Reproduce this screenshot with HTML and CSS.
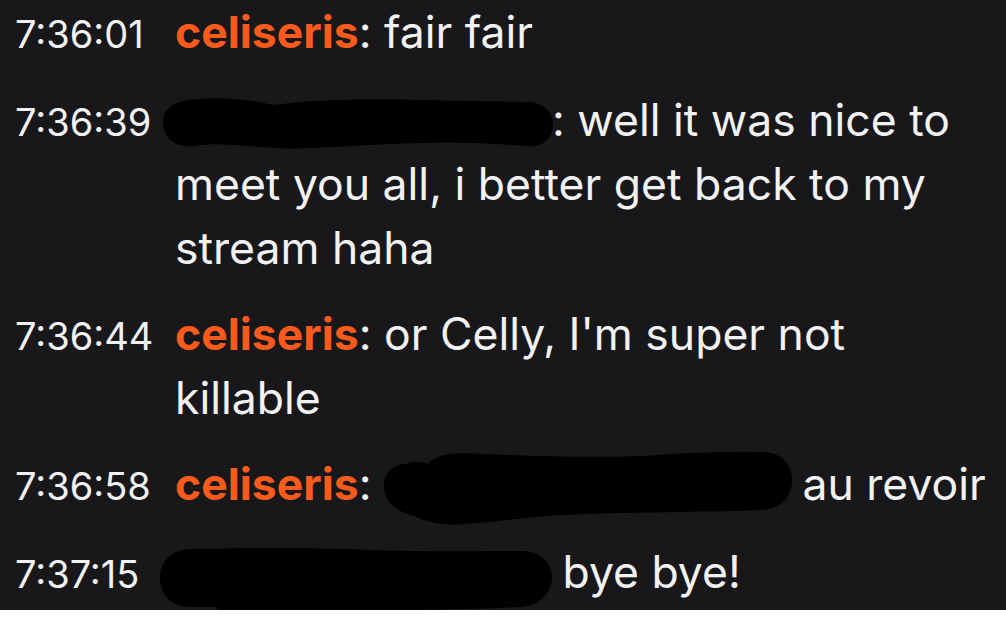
FILE: index.html
```html
<!DOCTYPE html>
<html lang="en">
<head>
<meta charset="utf-8">
<title>Chat</title>
<link rel="stylesheet" href="styles.css">
</head>
<body>
<div class="chat">
  <div class="msg">
    <span class="time">7:36:01</span>
    <p class="body"><span class="user">celiseris</span>: fair fair</p>
  </div>
  <div class="msg">
    <span class="time">7:36:39</span>
    <p class="body"><span class="redact r1"><svg width="390" height="54" viewBox="0 0 390 54"><path d="M27,4 C55,0 85,3 110,9 C150,4 200,2 260,4 L364,6 C380,6 390,16 390,28 C390,42 380,52 364,50 C330,47 300,46 260,47 C200,48 150,54 110,52 C80,50 55,46 30,50 C10,52 0,40 0,27 C0,12 12,5 27,4 Z" fill="#000"/></svg></span>: well it was nice to meet you all, i better get back to my stream haha</p>
  </div>
  <div class="msg">
    <span class="time">7:36:44</span>
    <p class="body"><span class="user">celiseris</span>: or Celly, I'm super not killable</p>
  </div>
  <div class="msg">
    <span class="time">7:36:58</span>
    <p class="body"><span class="user">celiseris</span>: <span class="redact r3"><svg width="408" height="76" viewBox="0 0 408 76"><path d="M22,14 C30,10 40,12 44,14 C52,4 70,2 100,4 C150,6 200,8 260,6 C300,3 340,1 380,2 C398,3 408,14 408,30 C408,46 398,58 380,60 C330,62 260,62 200,64 C150,66 110,72 80,74 C55,76 45,72 30,66 C8,60 0,50 0,36 C0,22 10,14 22,14 Z" fill="#000"/></svg></span> au revoir</p>
  </div>
  <div class="msg">
    <span class="time">7:37:15</span>
    <p class="body"><span class="redact r4"><svg width="392" height="74" viewBox="0 0 392 74"><path d="M30,2 C80,1 150,0 210,3 C260,5 320,4 362,4 C380,4 392,16 392,30 C392,46 380,58 362,60 C320,62 290,62 260,63 C220,64 200,66 150,69 C110,72 80,74 70,72 C62,70 58,66 56,60 L30,60 C12,60 0,48 0,31 C0,14 12,3 30,2 Z" fill="#000"/></svg></span> bye bye!</p>
  </div>
</div>
</body>
</html>
```

FILE: styles.css
```css
html, body {
  margin: 0;
  padding: 0;
  background: #ffffff;
}

.chat {
  height: 610px;
  background: #18181b;
  font-family: Inter, "Noto Sans", sans-serif;
  font-size: 44.5px;
  line-height: 64px;
  color: #f2f2f4;
}

.msg {
  display: flex;
  align-items: baseline;
  padding: 0 11px 22px 15px;
}

.time {
  flex: 0 0 160px;
  font-size: 38px;
  white-space: nowrap;
}

.body {
  margin: 0;
  flex: 1;
}

.user {
  color: #fa5a1c;
  font-weight: 700;
}

.redact {
  display: inline-block;
  position: relative;
  height: 0;
}

.redact svg {
  position: absolute;
  display: block;
}

.r1 {
  width: 377px;
}

.r1 svg {
  left: -12px;
  bottom: -14px;
}

.r3 {
  width: 406px;
}

.r3 svg {
  left: 0;
  bottom: -26px;
}

.r4 {
  width: 375px;
}

.r4 svg {
  left: -15px;
  bottom: -33px;
}
```
